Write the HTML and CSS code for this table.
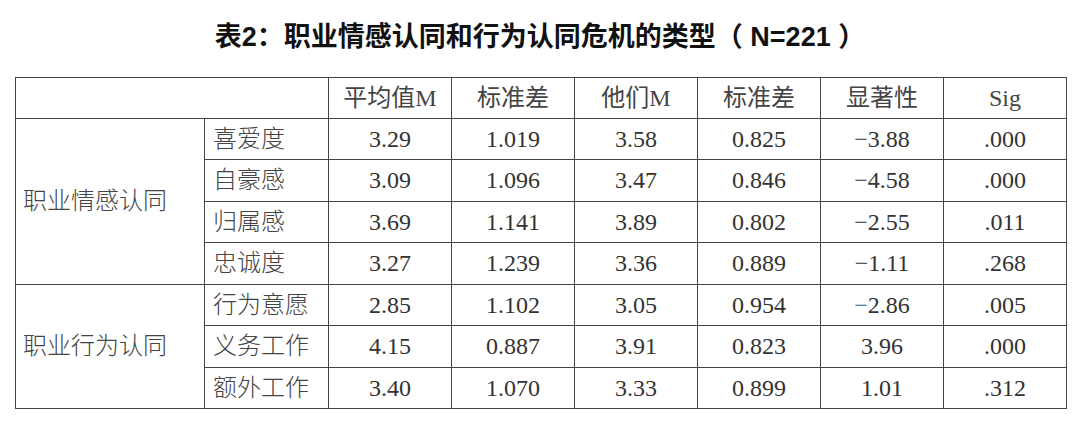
FILE: index.html
```
<!DOCTYPE html>
<html lang="zh-CN">
<head>
    <meta charset="UTF-8">
    <title>表2：职业情感认同和行为认同危机的类型</title>
    <link rel="stylesheet" href="styles.css">
</head>
<body>
    <h1 class="title">表2：职业情感认同和行为认同危机的类型（ N=221 ）</h1>
    <table class="stats">
        <colgroup>
            <col class="c-group">
            <col class="c-item">
            <col span="6" class="c-num">
        </colgroup>
        <tr class="head">
            <th colspan="2"></th>
            <th>平均值M</th>
            <th>标准差</th>
            <th>他们M</th>
            <th>标准差</th>
            <th>显著性</th>
            <th>Sig</th>
        </tr>
        <!-- 情感认同 -->
        <tr>
            <td rowspan="4" class="group">职业情感认同</td>
            <td class="item">喜爱度</td>
            <td>3.29</td><td>1.019</td><td>3.58</td><td>0.825</td><td>−3.88</td><td>.000</td>
        </tr>
        <tr>
            <td class="item">自豪感</td>
            <td>3.09</td><td>1.096</td><td>3.47</td><td>0.846</td><td>−4.58</td><td>.000</td>
        </tr>
        <tr>
            <td class="item">归属感</td>
            <td>3.69</td><td>1.141</td><td>3.89</td><td>0.802</td><td>−2.55</td><td>.011</td>
        </tr>
        <tr>
            <td class="item">忠诚度</td>
            <td>3.27</td><td>1.239</td><td>3.36</td><td>0.889</td><td>−1.11</td><td>.268</td>
        </tr>
        <!-- 行为认同 -->
        <tr>
            <td rowspan="3" class="group">职业行为认同</td>
            <td class="item">行为意愿</td>
            <td>2.85</td><td>1.102</td><td>3.05</td><td>0.954</td><td><span class="minus">−</span>2.86</td><td>.005</td>
        </tr>
        <tr>
            <td class="item">义务工作</td>
            <td>4.15</td><td>0.887</td><td>3.91</td><td>0.823</td><td>3.96</td><td>.000</td>
        </tr>
        <tr>
            <td class="item">额外工作</td>
            <td>3.40</td><td>1.070</td><td>3.33</td><td>0.899</td><td>1.01</td><td>.312</td>
        </tr>
    </table>
</body>
</html>
```
FILE: styles.css
```
body {
    margin: 0;
    background-color: #fff;
    color: #2b2b2b;
    font-family: "Liberation Serif", "Noto Sans CJK SC", serif;
}
.title {
    margin: 0;
    padding-top: 20px;
    height: 57px;
    box-sizing: border-box;
    text-align: center;
    font-family: "Liberation Sans", "Noto Sans CJK SC", sans-serif;
    font-size: 27px;
    font-weight: bold;
    line-height: 34px;
    color: #111;
}
.stats {
    margin-left: 15px;
    margin-top: 20px;
    border-collapse: collapse;
    table-layout: fixed;
    width: 1051px;
    font-size: 24px;
}
.c-group {
    width: 189px;
}
.c-item {
    width: 124px;
}
.c-num {
    width: 123px;
}
.stats th,
.stats td {
    border: 1.5px solid #444;
    padding: 0;
    height: 40.5px;
    text-align: center;
    font-weight: normal;
    line-height: 1;
    color: #333;
}
.stats th {
    color: #444;
}
.stats .head th {
    height: 39.5px;
}
.stats td.group,
.stats td.item {
    text-align: left;
    padding-left: 8px;
    font-weight: 300;
    color: #444;
}
.stats td.group {
    padding-left: 7px;
}
.minus {
    color: #2d5f80;
}
```
